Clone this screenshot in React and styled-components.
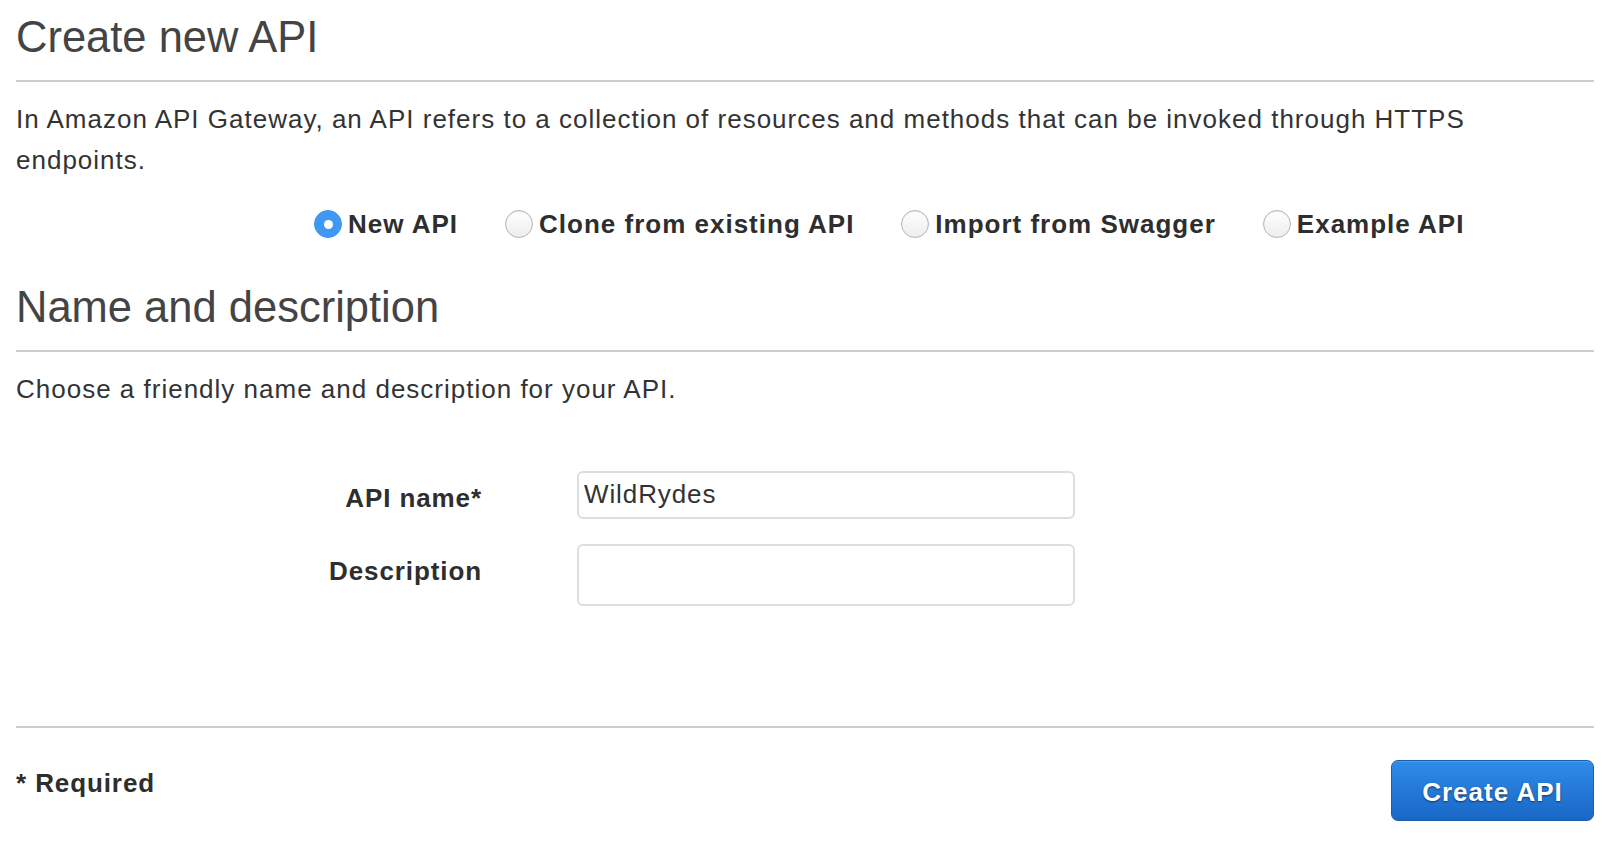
import React from "react";
import styled, { createGlobalStyle } from "styled-components";

const GlobalStyle = createGlobalStyle`
  html, body { margin: 0; padding: 0; background: #fff; }
  body { font-family: "Liberation Sans", Arial, Helvetica, sans-serif; color: #333; }
  * { box-sizing: border-box; }
`;

const Page = styled.div`
  padding: 13px 12px 0 16px;
  width: 1606px;
`;

const Title = styled.h1`
  margin: 0;
  font-size: 43.5px;
  line-height: 48px;
  font-weight: 400;
  color: #444;
`;

const Rule = styled.hr`
  margin: ${(p) => p.$top}px 0 0 0;
  border: 0;
  height: 2px;
  background: #cccccc;
`;

const Text = styled.p`
  margin: 17px 0 0 0;
  font-size: 26px;
  line-height: 41px;
  letter-spacing: 1px;
  color: #333;
`;

const RadioRow = styled.div`
  display: flex;
  align-items: center;
  gap: 47px;
  margin: 29px 0 0 298px;
  height: 28px;
`;

const RadioLabel = styled.label`
  display: flex;
  align-items: center;
  gap: 6px;
  font-size: 26px;
  line-height: 30px;
  font-weight: 700;
  letter-spacing: 1px;
  color: #2e2e2e;
  cursor: pointer;
`;

const RadioDot = styled.input.attrs({ type: "radio" })`
  appearance: none;
  -webkit-appearance: none;
  margin: 0;
  width: 28px;
  height: 28px;
  border-radius: 50%;
  flex: none;
  position: relative;
  border: 1px solid #b5b5b5;
  background: linear-gradient(#ffffff, #ededed);
  box-shadow: inset 0 1px 1px rgba(0, 0, 0, 0.08);
  &:checked {
    border-color: #3d95f2;
    background: #4098f5;
    box-shadow: none;
  }
  &:checked::after {
    content: "";
    position: absolute;
    left: 50%;
    top: 50%;
    width: 9px;
    height: 9px;
    margin: -4.5px 0 0 -4.5px;
    border-radius: 50%;
    background: #fff;
  }
`;

const Heading = styled.h2`
  margin: 45px 0 0 0;
  font-size: 43.5px;
  line-height: 48px;
  font-weight: 400;
  color: #444;
`;

const FormGrid = styled.div`
  display: grid;
  grid-template-columns: 466px 498px;
  column-gap: 95px;
  row-gap: 25px;
  margin-top: 61px;
`;

const FieldLabel = styled.label`
  text-align: right;
  padding-top: 6px;
  font-size: 26px;
  line-height: 42px;
  font-weight: 700;
  letter-spacing: 0.9px;
  color: #2e2e2e;
`;

const TextInput = styled.input`
  width: 498px;
  height: ${(p) => p.$h}px;
  border: 2px solid #dedede;
  border-radius: 6px;
  padding: 0 0 2px 5px;
  font-family: "Liberation Sans", Arial, sans-serif;
  font-size: 26px;
  letter-spacing: 0.9px;
  color: #333;
  background: #fff;
  outline: none;
`;

const Footer = styled.div`
  display: flex;
  justify-content: space-between;
  align-items: flex-start;
  margin-top: 32px;
`;

const Required = styled.div`
  padding-top: 3px;
  font-size: 26px;
  line-height: 40px;
  font-weight: 700;
  letter-spacing: 0.9px;
  color: #2e2e2e;
`;

const PrimaryButton = styled.button`
  width: 203px;
  height: 61px;
  padding: 3px 0 0 0;
  border: 1px solid #1a5cae;
  border-radius: 7px;
  background: linear-gradient(#2f8ce8, #1966c6);
  color: #fff;
  font-family: "Liberation Sans", Arial, sans-serif;
  font-size: 26px;
  font-weight: 700;
  letter-spacing: 1px;
  text-shadow: 0 1px 2px rgba(0, 0, 0, 0.55);
  box-shadow: inset 0 1px 0 rgba(255, 255, 255, 0.15);
  cursor: pointer;
`;

const options = [
  { id: "new", label: "New API", checked: true },
  { id: "clone", label: "Clone from existing API" },
  { id: "swagger", label: "Import from Swagger" },
  { id: "example", label: "Example API" },
];

export default function App() {
  return (
    <>
      <GlobalStyle />
      <Page>
        <Title>Create new API</Title>
        <Rule $top={19} />
        <Text>
          In Amazon API Gateway, an API refers to a collection of resources and methods that can be
          invoked through HTTPS endpoints.
        </Text>
        <RadioRow>
          {options.map((o) => (
            <RadioLabel key={o.id}>
              <RadioDot name="apiType" defaultChecked={!!o.checked} />
              {o.label}
            </RadioLabel>
          ))}
        </RadioRow>
        <Heading>Name and description</Heading>
        <Rule $top={19} />
        <Text>Choose a friendly name and description for your API.</Text>
        <FormGrid>
          <FieldLabel htmlFor="apiName">API name*</FieldLabel>
          <TextInput id="apiName" $h={48} defaultValue="WildRydes" />
          <FieldLabel htmlFor="apiDesc">Description</FieldLabel>
          <TextInput id="apiDesc" $h={62} />
        </FormGrid>
        <Rule $top={120} />
        <Footer>
          <Required>* Required</Required>
          <PrimaryButton>Create API</PrimaryButton>
        </Footer>
      </Page>
    </>
  );
}
